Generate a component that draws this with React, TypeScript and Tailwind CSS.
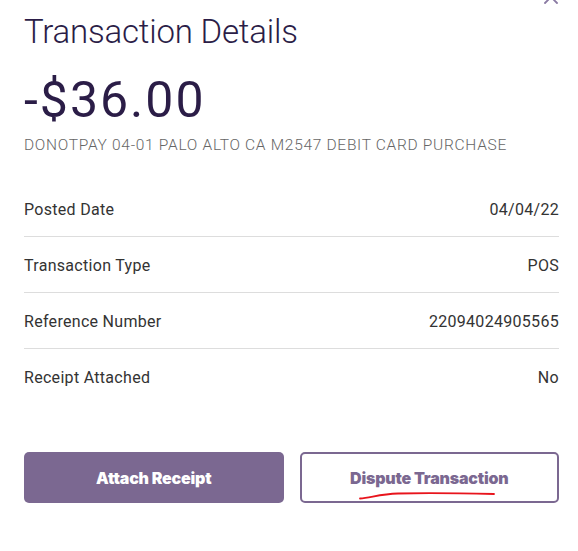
import React from 'react';

const rows = [
  { label: 'Posted Date', value: '04/04/22' },
  { label: 'Transaction Type', value: 'POS' },
  { label: 'Reference Number', value: '22094024905565' },
  { label: 'Receipt Attached', value: 'No' },
];

export default function App() {
  return (
    <div className="relative w-[578px] h-[551px] bg-white overflow-hidden pl-6 pr-[19px] font-['Roboto',sans-serif]">
      {/* close button, mostly scrolled out of view */}
      <svg className="absolute left-[543px] top-[-11px]" width="16" height="16" viewBox="0 0 16 16">
        <path d="M2 2 L14 14 M14 2 L2 14" stroke="#8a7aa3" strokeWidth="1.8" strokeLinecap="round" />
      </svg>

      <h1 className="pt-[12px] text-[33px] leading-[40px] font-light text-[#2b1d47] tracking-[-0.2px]">
        Transaction Details
      </h1>

      <div className="mt-[20px] text-[50px] leading-[56px] font-normal text-[#2b1d47] tracking-[2px]">
        -$36.00
      </div>

      <p className="mt-[7px] text-[15.5px] leading-[20px] font-light text-[#666666] uppercase tracking-[0.7px]">
        DONOTPAY 04-01 PALO ALTO CA M2547 DEBIT CARD PURCHASE
      </p>

      <div className="mt-[26px]">
        {rows.map((r, i) => (
          <div
            key={r.label}
            className={`flex justify-between pt-[19px] pb-[17px] text-[16px] leading-[19px] text-[#333333] tracking-[0.3px] ${
              i < rows.length - 1 ? 'border-b border-[#dddddd]' : ''
            }`}
          >
            <span>{r.label}</span>
            <span>{r.value}</span>
          </div>
        ))}
      </div>

      <div className="mt-[48px] grid grid-cols-2 gap-4">
        <button className="h-[51px] rounded-[5px] bg-[#7b6891] text-white text-[16px] font-black font-['Inter',sans-serif] tracking-[-0.2px]">
          Attach Receipt
        </button>
        <button className="relative h-[51px] rounded-[5px] border-2 border-[#7b6891] bg-white text-[#7b6891] text-[16px] font-black font-['Inter',sans-serif] tracking-[-0.2px]">
          Dispute Transaction
          <svg className="absolute left-[56px] top-[37px]" width="140" height="10" viewBox="0 0 140 10">
            <path
              d="M2 7.5 C 12 7, 22 3, 40 2.5 C 70 1.8, 110 2.4, 136 3"
              stroke="#e8141c"
              strokeWidth="1.8"
              fill="none"
              strokeLinecap="round"
            />
          </svg>
        </button>
      </div>
    </div>
  );
}
